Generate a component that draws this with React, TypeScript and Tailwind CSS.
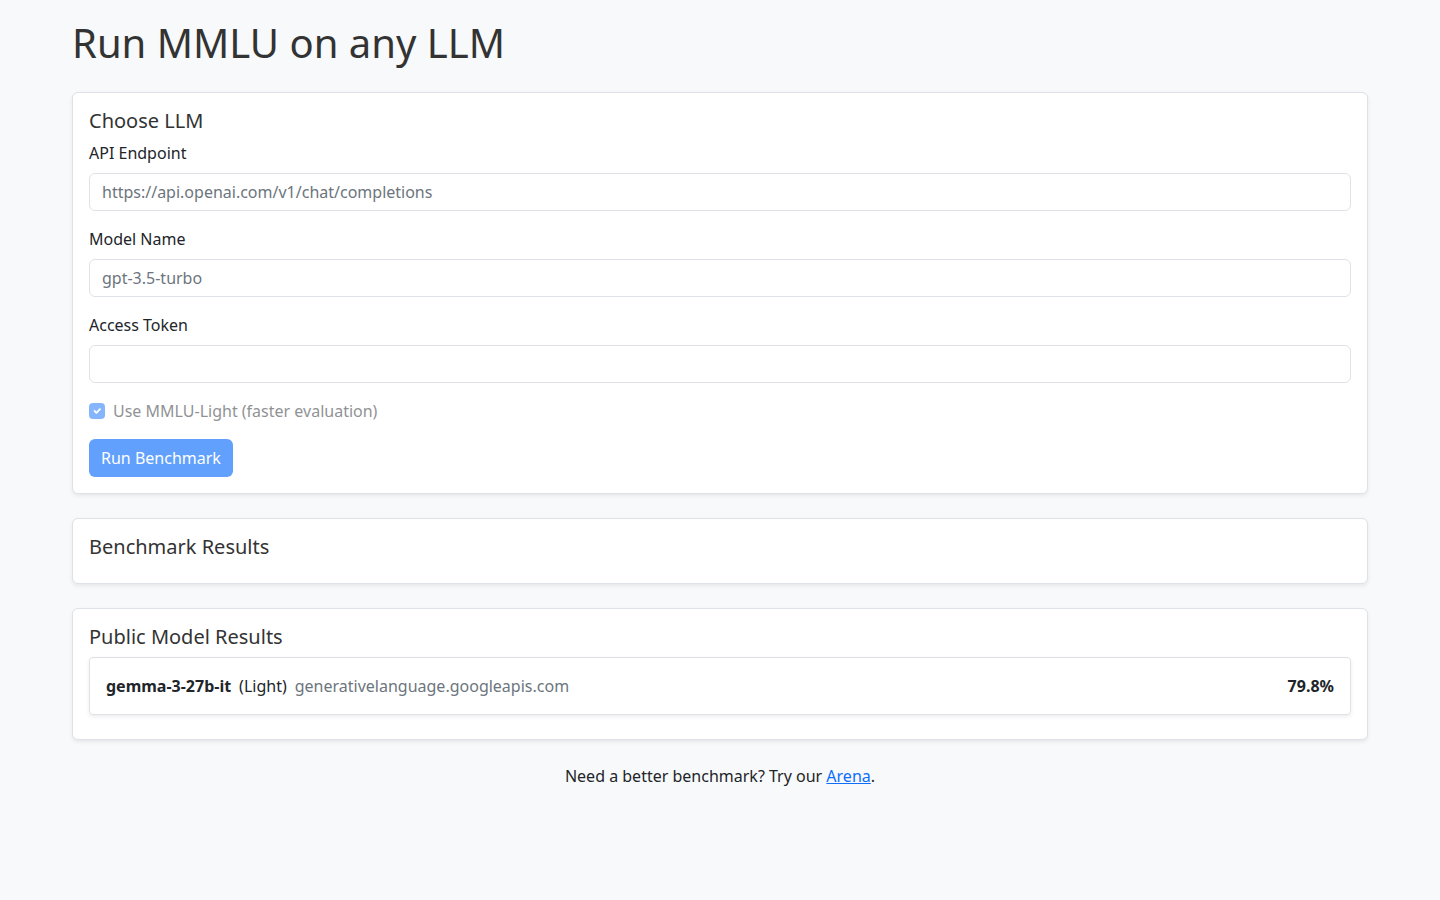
export default function App() {
  const font = "font-['DejaVu_Sans',sans-serif]";
  const input =
    "block w-full h-[38px] rounded-[6px] border border-[#dee2e6] bg-white px-3 text-base text-[#212529] placeholder:text-[#6c757d] outline-none";
  return (
    <div className={`min-h-[900px] bg-[#f8f9fa] text-[#212529] ${font} text-base leading-6`}>
      <div className="mx-[72px] pt-[19px] pb-10">
        <h1 className="text-[40px] leading-[48px] mb-[25px] text-[#333]">Run MMLU on any LLM</h1>

        <div className="bg-white border border-[#dee2e6] rounded-[6px] shadow-[0_2px_4px_rgba(0,0,0,0.075)] p-4">
          <h5 className="text-[20px] leading-6 mb-2 text-[#333]">Choose LLM</h5>
          <label className="block mb-2">API Endpoint</label>
          <input className={`${input} mb-4`} placeholder="https://api.openai.com/v1/chat/completions" />
          <label className="block mb-2">Model Name</label>
          <input className={`${input} mb-4`} placeholder="gpt-3.5-turbo" />
          <label className="block mb-2">Access Token</label>
          <input className={`${input} mb-4`} type="password" />
          <div className="flex items-center h-6 mb-4 gap-2 opacity-50">
            <span className="w-4 h-4 rounded-[4px] bg-[#0d6efd] flex items-center justify-center">
              <svg viewBox="0 0 20 20" className="w-3 h-3" fill="none" stroke="#fff" strokeWidth="3" strokeLinecap="round" strokeLinejoin="round">
                <path d="M6 10l3 3 6-6" />
              </svg>
            </span>
            <span>Use MMLU-Light (faster evaluation)</span>
          </div>
          <button className="h-[38px] px-3 rounded-[6px] bg-[#0d6efd] opacity-65 text-white">Run Benchmark</button>
        </div>

        <div className="mt-6 bg-white border border-[#dee2e6] rounded-[6px] shadow-[0_2px_4px_rgba(0,0,0,0.075)] p-4">
          <h5 className="text-[20px] leading-6 mb-2 text-[#333]">Benchmark Results</h5>
        </div>

        <div className="mt-6 bg-white border border-[#dee2e6] rounded-[6px] shadow-[0_2px_4px_rgba(0,0,0,0.075)] p-4">
          <h5 className="text-[20px] leading-6 mb-2 text-[#333]">Public Model Results</h5>
          <div className="mb-2 border border-[#dee2e6] rounded-[4px] shadow-[0_2px_4px_rgba(0,0,0,0.075)] p-4 flex items-center justify-between">
            <div className="flex items-center gap-2">
              <span className="font-bold">gemma-3-27b-it</span>
              <span>(Light)</span>
              <span className="text-[#6c757d]">generativelanguage.googleapis.com</span>
            </div>
            <span className="font-bold">79.8%</span>
          </div>
        </div>

        <p className="mt-6 text-center">
          Need a better benchmark? Try our <a href="#" className="text-[#0d6efd] underline">Arena</a>.
        </p>
      </div>
    </div>
  );
}
